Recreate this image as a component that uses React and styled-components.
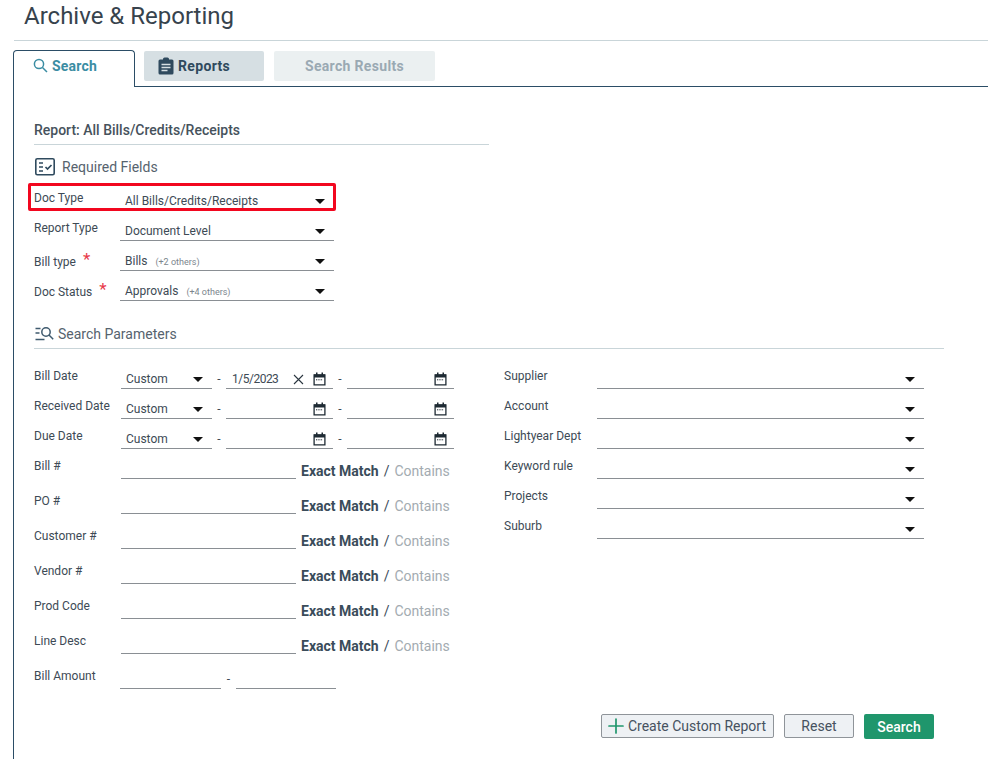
import React from "react";
import styled, { createGlobalStyle } from "styled-components";
import { Plus } from "lucide-react";

const Global = createGlobalStyle`
  html, body { margin: 0; padding: 0; background: #fff; }
  body { font-family: Roboto, "Liberation Sans", sans-serif; color: #3d4a55; overflow: hidden; }
  * { box-sizing: border-box; }
`;

const Page = styled.div`
  width: 988px;
  height: 759px;
  overflow: hidden;
`;
const Header = styled.header`
  height: 41px;
  margin-left: 14px;
  padding-left: 10px;
  border-bottom: 1px solid #c9d5d9;
`;
const Title = styled.h1`
  margin: 0;
  font-size: 24px;
  line-height: 32px;
  font-weight: 400;
  color: #37434d;
`;
const TabBar = styled.nav`
  display: flex;
  align-items: flex-start;
  gap: 10px;
  height: 37px;
  margin: 9px 0 0 13px;
  border-bottom: 1px solid #2b4d66;
`;
const ActiveTab = styled.div`
  display: flex;
  align-items: center;
  gap: 4px;
  width: 122px;
  height: 37px;
  margin-right: -1px;
  padding: 0 0 7px 19px;
  background: #fff;
  border: 1px solid #2b4d66;
  border-bottom: 0;
  border-radius: 4px 4px 0 0;
  font-size: 14px;
  font-weight: 700;
  letter-spacing: 0.2px;
  color: #3b8da3;
`;
const Tab = styled.div`
  display: flex;
  align-items: center;
  justify-content: ${(p) => (p.$disabled ? "center" : "flex-start")};
  gap: 4px;
  width: ${(p) => p.$w}px;
  height: 30px;
  margin-top: 1px;
  padding-left: ${(p) => (p.$disabled ? 0 : 14)}px;
  border-radius: 2px;
  font-size: 14px;
  font-weight: 700;
  letter-spacing: 0.33px;
  background: ${(p) => (p.$disabled ? "#ebf0f1" : "#d6dfe3")};
  color: ${(p) => (p.$disabled ? "#9aa9b3" : "#2f4a5e")};
`;
const Panel = styled.main`
  margin-left: 13px;
  height: 680px;
  padding: 35px 44px 0 20px;
  border-left: 1px solid #2b4d66;
`;
const ReportTitle = styled.h2`
  width: 455px;
  height: 23px;
  margin: 0;
  font-size: 14px;
  line-height: 17px;
  font-weight: 500;
  color: #46525c;
  border-bottom: 1px solid #c9d5d9;
`;
const SectionHead = styled.div`
  display: flex;
  align-items: center;
  gap: ${(p) => p.$gap}px;
  height: 36px;
  padding: 8px 0 0 1px;
  font-size: 14px;
  color: #56636e;
`;
const ParamHead = styled(SectionHead)`
  margin-top: 19px;
  height: 29px;
  padding: 0 0 1px 1px;
  border-bottom: 1px solid #c9d5d9;
`;
const Row = styled.div`
  position: relative;
  display: flex;
  height: 30px;
  margin-top: ${(p) => p.$mt || 0}px;
`;
const Label = styled.label`
  display: flex;
  align-items: flex-start;
  gap: 7px;
  flex: none;
  width: ${(p) => p.$w}px;
  padding-top: ${(p) => (p.$low ? 13 : 9)}px;
  font-size: 12px;
  line-height: 16px;
  color: #3d4a55;
`;
const Star = styled.span`
  margin-top: -2px;
  color: #e8394a;
  font-size: 17px;
  line-height: 15px;
`;
const Select = styled.div`
  display: flex;
  align-items: center;
  justify-content: space-between;
  flex: none;
  width: ${(p) => p.$w}px;
  height: 30px;
  padding: 10px 9px 0 5px;
  border-bottom: 1px solid ${(p) => (p.$plain ? "transparent" : "#8a8f94")};
  font-size: 12px;
  color: #3d4a55;
`;
const Muted = styled.small`
  margin-left: 8px;
  font-size: 9px;
  color: #7b858d;
`;
const Caret = styled.i`
  flex: none;
  width: 0;
  height: 0;
  margin-top: 2px;
  border-left: 5px solid transparent;
  border-right: 5px solid transparent;
  border-top: 5px solid #111;
`;
const Highlight = styled.div`
  position: absolute;
  left: -6px;
  top: 2px;
  width: 308px;
  height: 28px;
  border: 3px solid #f2071f;
  border-radius: 2px;
  pointer-events: none;
`;
const Columns = styled.div`
  display: flex;
  margin-top: 10px;
`;
const LeftCol = styled.section`
  width: 470px;
  flex: none;
`;
const RightCol = styled.section`
  flex: none;
  width: 420px;
`;
const Dash = styled.span`
  flex: none;
  width: ${(p) => p.$w || 14}px;
  padding-top: 11px;
  font-size: 12px;
  text-align: center;
  color: #3d4a55;
  line-height: 18px;
`;
const DateField = styled.div`
  display: flex;
  align-items: center;
  justify-content: space-between;
  flex: none;
  width: 107px;
  height: 30px;
  padding: 11px 7px 0 6px;
  border-bottom: 1px solid #8a8f94;
  font-size: 12px;
  letter-spacing: -0.5px;
  color: #3d4a55;
`;
const DateTools = styled.span`
  display: flex;
  align-items: center;
  gap: 9px;
  margin-left: auto;
`;
const TextInput = styled.div`
  flex: none;
  width: ${(p) => p.$w}px;
  height: 30px;
  border-bottom: 1px solid #8a8f94;
`;
const MatchGroup = styled.div`
  display: flex;
  gap: 5px;
  margin-left: 5px;
  padding-top: 14px;
  font-size: 14px;
  line-height: 16px;
  white-space: nowrap;
`;
const Exact = styled.span`
  font-weight: 700;
  color: #3a4c5a;
`;
const Slash = styled.span`
  color: #3a4c5a;
`;
const Contains = styled.span`
  color: #a3abb1;
`;
const Actions = styled.div`
  display: flex;
  justify-content: flex-end;
  align-items: flex-start;
  gap: 10px;
  margin-top: 25px;
  padding-right: 10px;
`;
const Button = styled.button`
  display: flex;
  align-items: center;
  justify-content: center;
  width: ${(p) => p.$w}px;
  height: 24px;
  padding: 0 ${(p) => p.$pr || 0}px 0 0;
  border: 1px solid #8f9499;
  border-radius: 2px;
  background: #eef1f4;
  font: 400 14px Roboto, sans-serif;
  color: #465260;
`;
const PrimaryButton = styled(Button)`
  height: 25px;
  border: 0;
  background: #1f966c;
  color: #fff;
  font-weight: 500;
`;

const SearchIcon = () => (
  <svg width="15" height="15" viewBox="0 0 15 15" fill="none" stroke="#3b8da3" strokeWidth="1.5">
    <circle cx="6" cy="6" r="4.6" />
    <path d="M9.5 9.5 14 14" />
  </svg>
);
const ClipboardIcon = () => (
  <svg width="16" height="18" viewBox="0 0 16 18">
    <path fill="#2f4a5e" d="M2 2.5h3V2a1.5 1.5 0 0 1 1.5-1.5h3A1.5 1.5 0 0 1 11 2v.5h3A1.5 1.5 0 0 1 15.500 4v12a1.500 1.500 0 0 1-1.500 1.500H2A1.500 1.500 0 0 1 .5 16V4A1.500 1.500 0 0 1 2 2.500z" />
    <path stroke="#d6dfe3" strokeWidth="1.300" d="M3.500 7.500h9M3.500 10.500h9M3.500 13.500h6" />
  </svg>
);
const RequiredIcon = () => (
  <svg width="20" height="18" viewBox="0 0 20 18" fill="none" stroke="#2f4a5e">
    <rect x=".8" y=".8" width="18.400" height="16" rx="1.500" strokeWidth="1.600" />
    <path strokeWidth="1.600" d="M4 5h4M4 9h4M4 13h4" />
    <path strokeWidth="1.700" d="m10.500 9 2 2 4-4" />
  </svg>
);
const ParamIcon = () => (
  <svg width="19" height="15" viewBox="0 0 19 15" fill="none" stroke="#3f5a6e" strokeWidth="1.500">
    <path d="M.5 2.500h5M.5 7h4M.5 13.500h9" />
    <circle cx="11" cy="6" r="4.200" />
    <path d="m14 9 4.200 4.200" />
  </svg>
);
const CalendarIcon = () => (
  <svg width="13" height="14" viewBox="0 0 13 14" fill="none">
    <path stroke="#1e2a33" strokeWidth="1.300" d="M1.100 2.800h10.800v10.100H1.100z" />
    <path fill="#1e2a33" d="M1 2.500h11v3H1zM3 .5h1.500V3H3zM8.500.5H10V3H8.500z" />
    <path stroke="#1e2a33" strokeDasharray="1.300 1" d="M3 7.800h7" />
  </svg>
);
const CloseIcon = () => (
  <svg width="11" height="11" viewBox="0 0 11 11" stroke="#2b3640" strokeWidth="1.100">
    <path d="m1 1 9 9M10 1l-9 9" />
  </svg>
);

const dateRows = [
  ["Bill Date", "1/5/2023"],
  ["Received Date", ""],
  ["Due Date", ""],
];
const textRows = ["Bill #", "PO #", "Customer #", "Vendor #", "Prod Code", "Line Desc"];
const rightRows = ["Supplier", "Account", "Lightyear Dept", "Keyword rule", "Projects", "Suburb"];

export default function App() {
  return (
    <Page>
      <Global />
      <Header>
        <Title>Archive &amp; Reporting</Title>
      </Header>
      <TabBar>
        <ActiveTab>
          <SearchIcon />
          Search
        </ActiveTab>
        <Tab $w={120}>
          <ClipboardIcon />
          Reports
        </Tab>
        <Tab $w={161} $disabled>
          Search Results
        </Tab>
      </TabBar>
      <Panel>
        <ReportTitle>Report: All Bills/Credits/Receipts</ReportTitle>
        <SectionHead $gap={7}>
          <RequiredIcon />
          Required Fields
        </SectionHead>
        <Row>
          <Label $w={86}>Doc Type</Label>
          <Select $w={214} $plain>
            All Bills/Credits/Receipts
            <Caret />
          </Select>
          <Highlight />
        </Row>
        <Row>
          <Label $w={86}>Report Type</Label>
          <Select $w={214}>
            Document Level
            <Caret />
          </Select>
        </Row>
        <Row>
          <Label $w={86} $low>
            Bill type <Star>*</Star>
          </Label>
          <Select $w={214}>
            <span>
              Bills<Muted>(+2 others)</Muted>
            </span>
            <Caret />
          </Select>
        </Row>
        <Row>
          <Label $w={86} $low>
            Doc Status <Star>*</Star>
          </Label>
          <Select $w={214}>
            <span>
              Approvals<Muted>(+4 others)</Muted>
            </span>
            <Caret />
          </Select>
        </Row>
        <ParamHead $gap={4}>
          <ParamIcon />
          Search Parameters
        </ParamHead>
        <Columns>
          <LeftCol>
            {dateRows.map(([label, value]) => (
              <Row key={label}>
                <Label $w={87}>{label}</Label>
                <Select $w={91}>
                  Custom
                  <Caret />
                </Select>
                <Dash>-</Dash>
                <DateField>
                  {value}
                  <DateTools>
                    {value && <CloseIcon />}
                    <CalendarIcon />
                  </DateTools>
                </DateField>
                <Dash>-</Dash>
                <DateField>
                  <DateTools>
                    <CalendarIcon />
                  </DateTools>
                </DateField>
              </Row>
            ))}
            {textRows.map((label, i) => (
              <Row key={label} $mt={i ? 5 : 0}>
                <Label $w={87}>{label}</Label>
                <TextInput $w={175} />
                <MatchGroup>
                  <Exact>Exact Match</Exact>
                  <Slash>/</Slash>
                  <Contains>Contains</Contains>
                </MatchGroup>
              </Row>
            ))}
            <Row $mt={5}>
              <Label $w={86}>Bill Amount</Label>
              <TextInput $w={101} />
              <Dash $w={15}>-</Dash>
              <TextInput $w={100} />
            </Row>
          </LeftCol>
          <RightCol>
            {rightRows.map((label) => (
              <Row key={label}>
                <Label $w={93}>{label}</Label>
                <Select $w={327}>
                  <span />
                  <Caret />
                </Select>
              </Row>
            ))}
          </RightCol>
        </Columns>
        <Actions>
          <Button $w={173} $pr={5}>
            <Plus size={24} color="#1f966c" strokeWidth={1.7} />
            Create Custom Report
          </Button>
          <Button $w={70}>Reset</Button>
          <PrimaryButton $w={70}>Search</PrimaryButton>
        </Actions>
      </Panel>
    </Page>
  );
}
